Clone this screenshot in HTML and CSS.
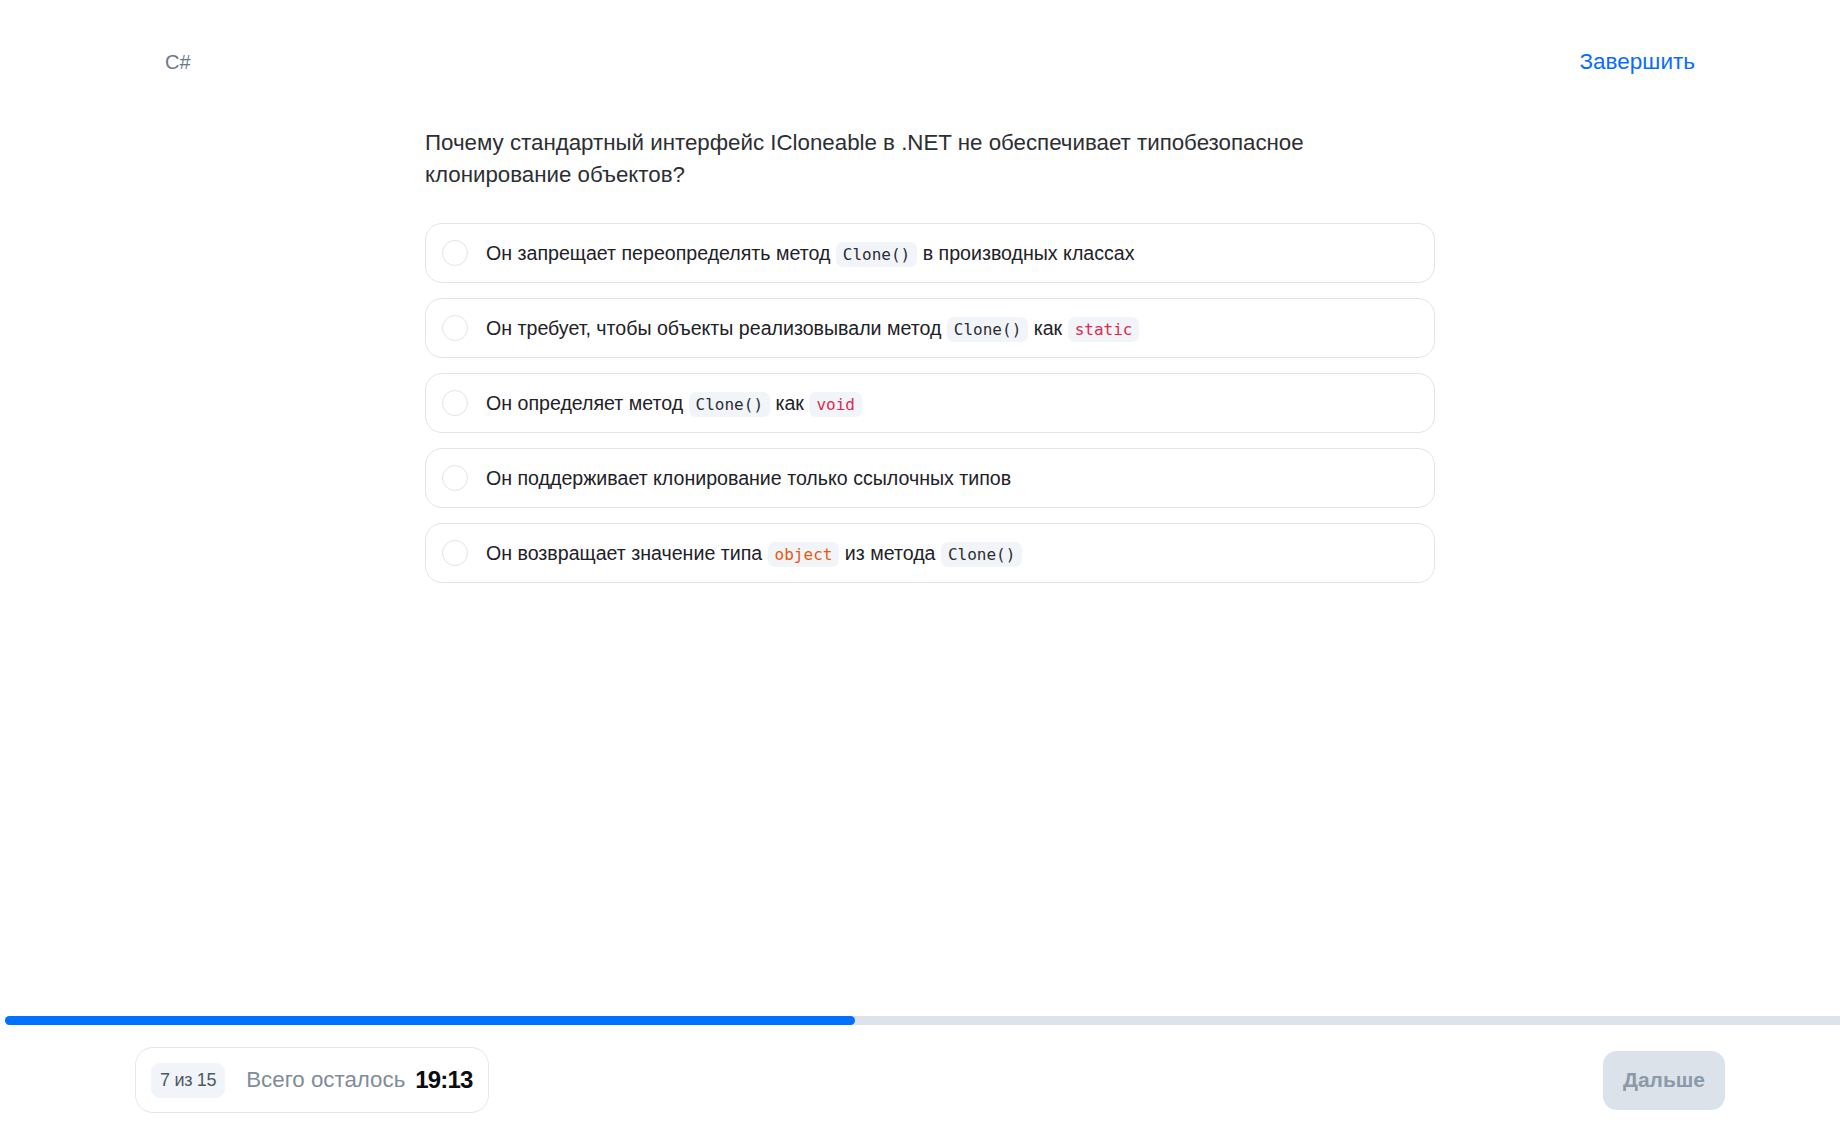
FILE: index.html
```html
<!DOCTYPE html>
<html lang="ru">
<head>
<meta charset="utf-8">
<title>C# тест</title>
<link rel="stylesheet" href="styles.css">
</head>
<body>
<div class="page">
  <header class="topbar">
    <span class="topic">C#</span>
    <a class="finish" href="#">Завершить</a>
  </header>
  <main class="quiz">
    <h1 class="question">Почему стандартный интерфейс ICloneable в .NET не обеспечивает типобезопасное клонирование объектов?</h1>
    <div class="options">
      <label class="option"><span class="radio"></span><span class="opt-text">Он запрещает переопределять метод <code class="code">Clone()</code> в производных классах</span></label>
      <label class="option"><span class="radio"></span><span class="opt-text">Он требует, чтобы объекты реализовывали метод <code class="code">Clone()</code> как <code class="code kw">static</code></span></label>
      <label class="option"><span class="radio"></span><span class="opt-text">Он определяет метод <code class="code">Clone()</code> как <code class="code kw">void</code></span></label>
      <label class="option"><span class="radio"></span><span class="opt-text">Он поддерживает клонирование только ссылочных типов</span></label>
      <label class="option"><span class="radio"></span><span class="opt-text">Он возвращает значение типа <code class="code type">object</code> из метода <code class="code">Clone()</code></span></label>
    </div>
  </main>
</div>
<footer class="footer">
  <div class="progress"><div class="progress-fill" style="width: 850px"></div></div>
  <div class="bottombar">
    <div class="timer">
      <span class="counter">7 из 15</span>
      <span class="remain">Всего осталось</span>
      <span class="time">19:13</span>
    </div>
    <button class="next" type="button">Дальше</button>
  </div>
</footer>
</body>
</html>
```
FILE: styles.css
```css
html, body {
  margin: 0;
  padding: 0;
  background: #ffffff;
  overflow: hidden;
}
body {
  width: 1840px;
  height: 1131px;
  font-family: "Liberation Sans", "Roboto", sans-serif;
  color: #1f2328;
  display: flex;
  flex-direction: column;
}
.page {
  flex: 1;
  padding-left: 20px;
  display: flex;
  flex-direction: column;
  align-items: center;
}
.topbar {
  width: 1530px;
  display: flex;
  justify-content: space-between;
  align-items: center;
  padding-top: 48px;
  height: 28px;
}
.topic {
  font-size: 20px;
  color: #6b7888;
}
.finish {
  font-size: 22.5px;
  color: #0a6cff;
  text-decoration: none;
}
.quiz {
  width: 1010px;
  margin-top: 50px;
}
.question {
  margin: 0 0 32px;
  padding-top: 1px;
  font-size: 22.3px;
  font-weight: 400;
  line-height: 32px;
  color: #2b2f33;
}
.options {
  display: flex;
  flex-direction: column;
  gap: 15px;
}
.option {
  height: 58px;
  border: 1px solid #dfe5ec;
  border-radius: 17px;
  display: flex;
  align-items: center;
  padding-left: 16px;
  gap: 18px;
}
.radio {
  width: 26px;
  height: 26px;
  border: 1px solid #dfe5ec;
  border-radius: 50%;
  box-sizing: border-box;
  flex: none;
}
.opt-text {
  font-size: 19.6px;
  color: #1e2227;
}
.code {
  font-family: "DejaVu Sans Mono", "Liberation Mono", monospace;
  font-size: 16px;
  background: #f1f4f8;
  color: #2a2e33;
  padding: 3px 7px;
  border-radius: 7px;
}
.code.kw { color: #dc2a50; }
.code.type { color: #e8590c; }
.footer {
  padding-left: 20px;
  display: flex;
  flex-direction: column;
  align-items: center;
  padding-bottom: 18px;
}
.progress {
  align-self: flex-start;
  margin-left: -15px;
  width: 1835px;
  height: 9px;
  background: #dce3ea;
  border-radius: 5px 0 0 5px;
}
.progress-fill {
  height: 100%;
  background: #0070ff;
  border-radius: 5px;
}
.bottombar {
  width: 1590px;
  margin-top: 22px;
  display: flex;
  justify-content: space-between;
  align-items: center;
}
.timer {
  height: 64px;
  border: 1px solid #e2e8ef;
  border-radius: 18px;
  display: flex;
  align-items: center;
  padding: 0 15px;
  gap: 21px;
}
.counter {
  background: #f1f4f8;
  border-radius: 9px;
  font-size: 18px;
  letter-spacing: -0.3px;
  color: #4d5966;
  padding: 7px 9px;
}
.remain {
  font-size: 22.3px;
  color: #7f8c9a;
  margin-right: -11px;
}
.time {
  font-size: 24px;
  font-weight: 700;
  letter-spacing: -0.8px;
  color: #0c0d0f;
}
.next {
  width: 122px;
  height: 59px;
  border: none;
  border-radius: 14px;
  background: #dbe2ea;
  color: #8c99a8;
  font-family: "Liberation Sans", "Roboto", sans-serif;
  font-size: 21px;
  font-weight: 700;
}
```
